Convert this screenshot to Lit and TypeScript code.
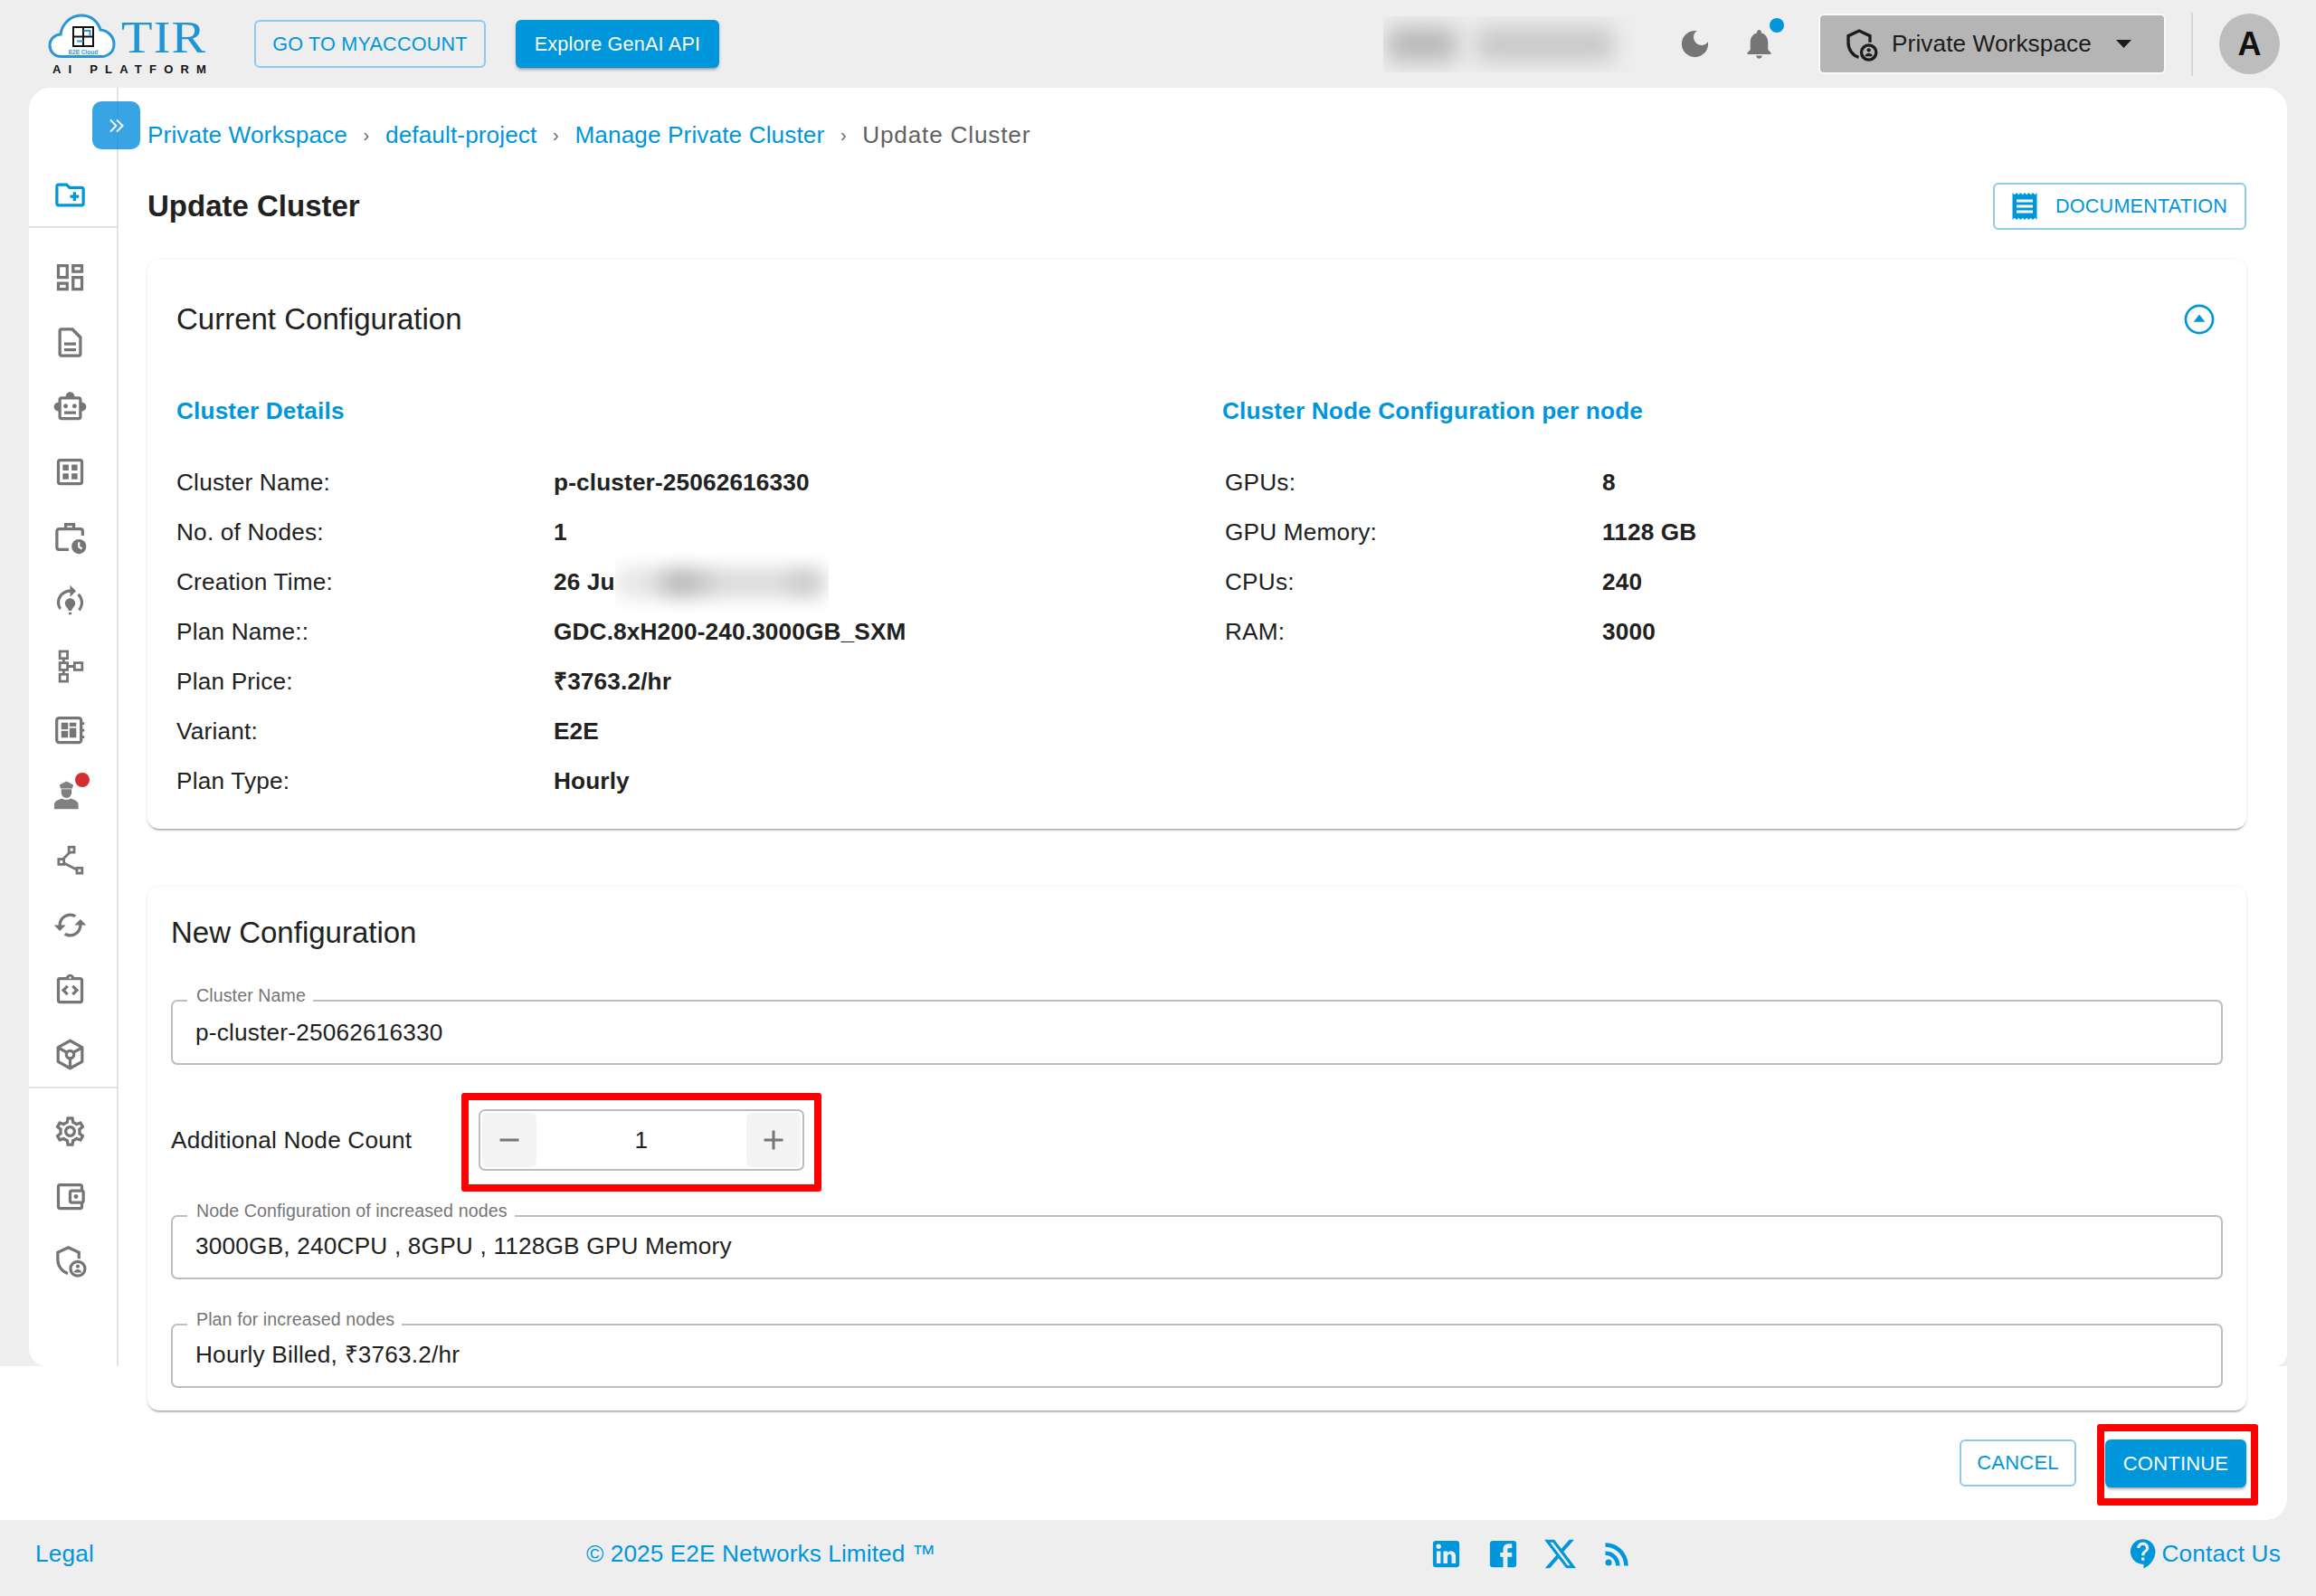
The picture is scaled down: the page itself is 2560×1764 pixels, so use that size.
import { LitElement, html, svg, css } from "lit";
import { customElement } from "lit/decorators.js";

const ic = (body: unknown, cls = "") => html`<svg class="ic ${cls}" viewBox="0 0 24 24">${body}</svg>`;
const P = (d: string) => svg`<path d=${d}></path>`;

function shieldIcon(cls = "") {
  return ic(svg`<path class="st" d="M10.5 20.6C6.4 19.4 3.6 15.4 3.6 11V6.4L10.8 3 18 6.4v4.2"></path><circle class="st wfill" cx="17.2" cy="17.4" r="4.9"></circle><circle class="pf" cx="17.2" cy="15.8" r="1.3"></circle><path class="pf" d="M14.6 20c.4-1.5 1.5-2.1 2.6-2.1s2.2.6 2.6 2.1z"></path>`, cls);
}

const sideTop = ic(P("M20 6h-8l-2-2H4c-1.11 0-1.99.89-1.99 2L2 18c0 1.11.89 2 2 2h16c1.11 0 2-.89 2-2V8c0-1.11-.89-2-2-2zm0 12H4V6h5.17l2 2H20v10zm-8-4h2v2h2v-2h2v-2h-2v-2h-2v2h-2z"), "blue");

const sideMain = [
  ic(P("M19 5v2h-4V5h4M9 5v6H5V5h4m10 8v6h-4v-6h4M9 17v2H5v-2h4M21 3h-8v6h8V3zM11 3H3v10h8V3zm10 8h-8v10h8V11zm-10 4H3v6h8v-6z")),
  ic(P("M8 16h8v2H8zm0-4h8v2H8zm6-10H6c-1.1 0-2 .9-2 2v16c0 1.1.89 2 1.99 2H18c1.1 0 2-.9 2-2V8l-6-6zm4 18H6V4h7l5 5v11z")),
  ic(P("M20 9V7c0-1.1-.9-2-2-2h-3c0-1.66-1.34-3-3-3S9 3.34 9 5H6c-1.1 0-2 .9-2 2v2c-1.66 0-3 1.34-3 3s1.34 3 3 3v4c0 1.1.9 2 2 2h12c1.1 0 2-.9 2-2v-4c1.66 0 3-1.34 3-3s-1.34-3-3-3zm-2 10H6V7h12v12zm-9-6c-.83 0-1.5-.67-1.5-1.5S8.17 10 9 10s1.5.67 1.5 1.5S9.83 13 9 13zm7.5-1.5c0 .83-.67 1.5-1.5 1.5s-1.5-.67-1.5-1.5.67-1.5 1.5-1.5 1.5.67 1.5 1.5zM8 15h8v2H8v-2z")),
  ic(P("M19 5v14H5V5h14m0-2H5c-1.1 0-2 .9-2 2v14c0 1.1.9 2 2 2h14c1.1 0 2-.9 2-2V5c0-1.1-.9-2-2-2zM7 7h4v4H7zm6 0h4v4h-4zm-6 6h4v4H7zm6 0h4v4h-4z")),
  ic(svg`<path class="st" d="M11 20.5H4.5a1.5 1.5 0 0 1-1.5-1.5V8a1.5 1.5 0 0 1 1.5-1.5h14.5a1.5 1.5 0 0 1 1.5 1.5v3M9 6.5V3.500h5.500v3"></path><circle cx="18" cy="18.500" r="5"></circle><path class="wst" d="M18 15.500v3.200l2 1.300"></path>`),
  ic(P("M15.5 13.5c0 2-2.5 3.5-2.5 5h-2c0-1.5-2.5-3-2.5-5 0-1.93 1.57-3.5 3.5-3.5s3.5 1.57 3.5 3.5zm-2.5 6h-2V21h2v-1.5zm6-6.5c0 1.68-.59 3.21-1.58 4.42l1.42 1.42C20.18 16.27 21 14.71 21 13c0-2.54-1.06-4.83-2.76-6.46L16.83 7.95C18.16 9.22 19 11.01 19 13zM16 5l-4-4v3c-4.97 0-9 4.03-9 9 0 1.71.82 3.27 1.84 4.84l1.42-1.42C5.59 16.21 5 14.68 5 13c0-3.87 3.13-7 7-7v3l4-4z")),
  ic(svg`<g class="st thin"><rect x="5" y="1.800" width="5.200" height="4.800"></rect><rect x="5" y="9.600" width="5.200" height="4.800"></rect><rect x="5" y="17.400" width="5.200" height="4.800"></rect><rect x="15" y="9.600" width="5.200" height="4.800"></rect><path d="M7.600 6.600v3M7.600 14.400v3M10.200 12H15"></path></g>`),
  ic(svg`<rect class="st" x="2.900" y="3.500" width="16.600" height="16.600" rx="1.600"></rect><rect x="6" y="6.600" width="4.600" height="4.600"></rect><rect x="11.600" y="6.600" width="4.600" height="2.600"></rect><rect x="6" y="12.200" width="4.600" height="4.600"></rect><rect x="11.600" y="10.200" width="4.600" height="6.600"></rect><path class="st thin" d="M19.500 7.200h2.200M19.500 11.800h2.200M19.500 16.400h2.200"></path>`),
  html`<span class="badged">${ic(svg`<path d="M4.800 4.600 9.500 2.200l4.700 2.400-.7 2.400H5.500z"></path><path d="M6 7.600h7v2.400a3.500 3.500 0 0 1-7 0z"></path><path d="M1.200 21v-3c0-2.600 3.600-3.600 5.100-4.200 1.400 1 4.900 1 6.300 0 1.500.6 5 1.600 5 4.200v3z"></path>`, "ltgrey")}<i class="dot"></i></span>`,
  ic(svg`<g class="st thin"><rect x="11.200" y="2.600" width="3.600" height="3.600"></rect><rect x="4.200" y="10.800" width="3.600" height="3.600"></rect><rect x="16.600" y="16.800" width="3.600" height="3.600"></rect><path d="M11.800 6.200 7.200 10.800M7.800 13.600l8.800 4.400"></path></g>`),
  ic(P("M19 8l-4 4h3c0 3.31-2.69 6-6 6-1.01 0-1.97-.25-2.8-.7l-1.46 1.46C8.97 19.54 10.43 20 12 20c4.42 0 8-3.58 8-8h3l-4-4zM6 12c0-3.31 2.69-6 6-6 1.01 0 1.97.25 2.8.7l1.46-1.46C15.03 4.46 13.57 4 12 4c-4.42 0-8 3.58-8 8H1l4 4 4-4H6z")),
  ic(P("M11 14.17 8.83 12 11 9.83 9.59 8.41 6 12l3.59 3.59zM14.41 15.59 18 12l-3.59-3.59L13 9.83 15.17 12 13 14.17zM19 3h-4.18C14.4 1.84 13.3 1 12 1s-2.4.84-2.82 2H5c-.14 0-.27.01-.4.04-.39.08-.74.28-1.01.55-.18.18-.33.4-.43.64-.1.23-.16.49-.16.77v14c0 .27.06.54.16.78s.25.45.43.64c.27.27.62.47 1.01.55.13.02.26.03.4.03h14c1.1 0 2-.9 2-2V5c0-1.1-.9-2-2-2zm-7-.25c.41 0 .75.34.75.75s-.34.75-.75.75-.75-.34-.75-.75.34-.75.75-.75zM19 19H5V5h14v14z")),
  ic(svg`<g class="st"><path stroke-linejoin="round" d="M12 2.600 20.200 7.200v9.600L12 21.400l-8.200-4.600V7.200z"></path><circle cx="12" cy="12" r="2.600"></circle><path d="M4 7.400l6 3.300M20 7.400l-6 3.300M12 14.600v6.600"></path></g>`),
];

const sideBottom = [
  ic(P("M19.43 12.98c.04-.32.07-.64.07-.98 0-.34-.03-.66-.07-.98l2.11-1.65c.19-.15.24-.42.12-.64l-2-3.46c-.09-.16-.26-.25-.44-.25-.06 0-.12.01-.17.03l-2.49 1c-.52-.4-1.08-.73-1.69-.98l-.38-2.65C14.46 2.18 14.25 2 14 2h-4c-.25 0-.46.18-.49.42l-.38 2.65c-.61.25-1.17.59-1.69.98l-2.49-1c-.06-.02-.12-.03-.18-.03-.17 0-.34.09-.43.25l-2 3.46c-.13.22-.07.49.12.64l2.11 1.65c-.04.32-.07.65-.07.98 0 .33.03.66.07.98l-2.11 1.65c-.19.15-.24.42-.12.64l2 3.46c.09.16.26.25.44.25.06 0 .12-.01.17-.03l2.49-1c.52.4 1.08.73 1.69.98l.38 2.65c.03.24.24.42.49.42h4c.25 0 .46-.18.49-.42l.38-2.65c.61-.25 1.17-.59 1.69-.98l2.49 1c.06.02.12.03.18.03.17 0 .34-.09.43-.25l2-3.46c.12-.22.07-.49-.12-.64l-2.11-1.65zm-1.98-1.71c.04.31.05.52.05.73 0 .21-.02.43-.05.73l-.14 1.13.89.7 1.08.84-.7 1.21-1.27-.51-1.04-.42-.9.68c-.43.32-.84.56-1.25.73l-1.06.43-.16 1.13-.2 1.35h-1.4l-.19-1.35-.16-1.13-1.06-.43c-.43-.18-.83-.41-1.23-.71l-.91-.7-1.06.43-1.27.51-.7-1.21 1.08-.84.89-.7-.14-1.13c-.03-.31-.05-.54-.05-.74s.02-.43.05-.73l.14-1.13-.89-.7-1.08-.84.7-1.21 1.27.51 1.04.42.9-.68c.43-.32.84-.56 1.25-.73l1.06-.43.16-1.13.2-1.35h1.39l.19 1.35.16 1.13 1.06.43c.43.18.83.41 1.23.71l.91.7 1.06-.43 1.27-.51.7 1.21-1.07.85-.89.7.14 1.13zM12 8c-2.21 0-4 1.79-4 4s1.79 4 4 4 4-1.79 4-4-1.79-4-4-4zm0 6c-1.1 0-2-.9-2-2s.9-2 2-2 2 .9 2 2-.9 2-2 2z")),
  ic(svg`<path d="M21 7.28V5c0-1.1-.9-2-2-2H5c-1.11 0-2 .9-2 2v14c0 1.1.89 2 2 2h14c1.1 0 2-.9 2-2v-2.28c.59-.35 1-.98 1-1.72V9c0-.74-.41-1.38-1-1.72zM20 9v6h-7V9h7zM5 19V5h14v2h-6c-1.1 0-2 .9-2 2v6c0 1.1.9 2 2 2h6v2H5z"></path><circle cx="16" cy="12" r="1.5"></circle>`),
  shieldIcon(),
];

const leftRows = [
  ["Cluster Name:", "p-cluster-25062616330"],
  ["No. of Nodes:", "1"],
  ["Creation Time:", "26 Ju"],
  ["Plan Name::", "GDC.8xH200-240.3000GB_SXM"],
  ["Plan Price:", "₹3763.2/hr"],
  ["Variant:", "E2E"],
  ["Plan Type:", "Hourly"],
];
const rightRows = [
  ["GPUs:", "8"],
  ["GPU Memory:", "1128 GB"],
  ["CPUs:", "240"],
  ["RAM:", "3000"],
];

@customElement("app-root")
export class AppRoot extends LitElement {
  static styles = css`
    :host { display: block; width: 2560px; height: 1764px; background: #eeeeee; font-family: "Liberation Sans", Arial, sans-serif; font-size: 26.2px; letter-spacing: .2px; color: #212121; overflow: hidden; }
    * { box-sizing: border-box; }
    .ic { width: 39px; height: 39px; fill: #757575; display: block; flex: none; }
    .ic.blue { fill: #0096db; }
    .ic.ltgrey { fill: #808080; }
    .st { fill: none; stroke: #757575; stroke-width: 2; }
    .st.thin, .thin { stroke-width: 1.7; }
    .wst { fill: none; stroke: #fff; stroke-width: 1.3; }
    .st.wfill { fill: #fff; }
    .pf { fill: #757575; }

    header { height: 97px; display: flex; align-items: center; padding: 0 40px 0 53px; }
    .logo { width: 228px; height: 67px; flex: none; display: flex; flex-direction: column; letter-spacing: 0; }
    .logotop { display: flex; height: 49px; flex: none; }
    .logotop svg { width: 75px; height: 49px; flex: none; display: block; }
    .tir { font-family: "Liberation Serif", serif; font-size: 50px; line-height: 49px; color: #2293d6; margin-left: 6px; letter-spacing: 1px; transform: scaleX(1.13); transform-origin: left center; margin-top: 2px; }
    .aip { font-size: 13px; font-weight: 700; line-height: 18px; letter-spacing: 8.2px; color: #111; margin: 4px 0 0 5px; white-space: nowrap; }
    .btn { display: inline-flex; align-items: center; justify-content: center; border-radius: 6px; font-size: 21.6px; flex: none; }
    .btn.out { border: 2px solid #90c9ec; color: #0096db; background: transparent; }
    .btn.fill { background: #0096db; color: #fff; box-shadow: 0 3px 3px -2px rgba(0,0,0,.3), 0 2px 4px rgba(0,0,0,.18); }
    .myacc { width: 256px; height: 53px; }
    .genai { width: 225px; height: 53px; margin-left: 33px; }
    .right { margin-left: auto; display: flex; align-items: center; }
    .blur { width: 282px; height: 62px; overflow: hidden; position: relative; display: flex; gap: 20px; padding: 12px 0 0 4px; }
    .blur i { display: block; height: 38px; filter: blur(12px); border-radius: 10px; flex: none; }
    .blur i:first-child { width: 78px; background: #b8b8b8; }
    .blur i:last-child { width: 154px; background: #c8c8c8; }
    .moon { margin-left: 43px; }
    .bellw { position: relative; margin-left: 32px; }
    .bdot { position: absolute; width: 16px; height: 16px; border-radius: 50%; background: #0096db; top: -9px; right: -8px; }
    .ws { width: 384px; height: 67px; margin-left: 46px; background: #b5b5b5; border: 2px solid #fafafa; border-radius: 6px; display: flex; align-items: center; padding-left: 25px; color: #1c1c1c; }
    .ws .ic { fill: #1c1c1c; width: 40px; height: 40px; }
    .ws .st { stroke: #1c1c1c; }
    .ws .st.wfill { fill: #b5b5b5; }
    .ws .pf { fill: #1c1c1c; }
    .ws span { margin-left: 14px; letter-spacing: .1px; }
    .ws svg.car { margin-left: 27px; width: 17px; height: 9px; fill: #1c1c1c; }
    .vr { width: 2px; height: 70px; background: #d6d6d6; margin-left: 28px; }
    .av { width: 67px; height: 67px; border-radius: 50%; background: #bdbdbd; margin-left: 29px; display: flex; align-items: center; justify-content: center; font-weight: 700; font-size: 36px; color: #111; }

    .main { width: 2528px; display: grid; grid-template-columns: 32px 99px 1fr; grid-template-rows: 1413px 170px; position: relative; }
    .panel { grid-column: 2 / 4; grid-row: 1; background: #fff; border-radius: 24px 24px 14px 20px; }
    .strip { grid-column: 1 / 4; grid-row: 2; background: #fff; border-bottom-right-radius: 24px; }
    .side { grid-column: 2; grid-row: 1; border-right: 2px solid #e2e2e2; padding-top: 83px; display: flex; flex-direction: column; align-items: center; }
    .sitem { height: 71.6px; width: 100%; display: flex; align-items: center; justify-content: center; flex: none; padding-right: 7px; }
    .sgroup { width: 100%; display: flex; flex-direction: column; }
    .g1 { border-bottom: 2px solid #e2e2e2; height: 72px; }
    .g2 { padding-top: 19px; border-bottom: 2px solid #e2e2e2; height: 951px; }
    .g3 { padding-top: 12px; }
    .badged { position: relative; display: block; }
    .dot { position: absolute; width: 16px; height: 16px; border-radius: 50%; background: #d32f2f; left: 25px; top: -6px; }
    .toggle { position: absolute; left: 102px; top: 15px; width: 53px; height: 53px; border-radius: 10px; background: rgba(0,138,220,.78); display: flex; align-items: center; justify-content: center; }
    .toggle svg { width: 24px; height: 24px; fill: none; stroke: #fff; stroke-width: 1.9; }

    .content { grid-column: 3; grid-row: 1 / 3; padding: 36px 45px 0 32px; min-width: 0; }
    .crumbs { display: flex; align-items: center; height: 32px; line-height: 32px; color: #0096db; white-space: nowrap; letter-spacing: .1px; }
    .crumbs .sep { color: #666; font-size: 20px; width: 42px; text-align: center; }
    .crumbs .cur { color: #616161; letter-spacing: .8px; }
    .titlebar { display: flex; align-items: center; justify-content: space-between; margin-top: 37px; height: 52px; }
    h1 { margin: 0; font-size: 33px; font-weight: 700; color: #212121; letter-spacing: 0; }
    .doc { width: 280px; height: 52px; background: #fff; justify-content: flex-start; padding-left: 15px; gap: 16px; }
    .doc .ic { width: 36px; height: 36px; fill: #0096db; }

    .card { background: #fff; border-radius: 13px; box-shadow: 0 3px 2px -2px rgba(0,0,0,.3), 0 2px 2px rgba(0,0,0,.1), 0 1px 5px rgba(0,0,0,.08); }
    .c1 { margin-top: 33px; height: 629px; padding: 46px 32px 0; }
    .chead { display: flex; align-items: center; justify-content: space-between; height: 40px; }
    h2 { margin: 0; font-size: 33px; font-weight: 400; line-height: 40px; color: #212121; letter-spacing: 0; }
    .chead svg { width: 38px; height: 38px; fill: none; stroke: #0096db; stroke-width: 1.7; flex: none; margin-right: 1px; }
    .chead svg path { fill: #0096db; stroke: none; }
    .cols { display: grid; grid-template-columns: 1156px 1fr; margin-top: 65px; }
    h3 { margin: 0 0 36px; font-size: 26.2px; font-weight: 700; color: #0096db; line-height: 32px; letter-spacing: .15px; }
    .rows { display: flex; flex-direction: column; }
    .row { display: flex; height: 55px; line-height: 55px; }
    .row .l { width: 417px; flex: none; }
    .row .v { font-weight: 700; position: relative; letter-spacing: .15px; }
    .rows.r { padding-left: 3px; }
    .mask { position: absolute; left: 68px; top: -4px; width: 236px; height: 64px; overflow: hidden; background: #fff; display: flex; align-items: center; }
    .mask i { display: block; height: 34px; width: 236px; flex: none; border-radius: 12px; filter: blur(10px); background: linear-gradient(90deg, #e8e8e8 0%, #e6e6e6 15%, #b6b6b6 30%, #dcdcdc 50%, #dedede 75%, #c6c6c6 90%, #e8e8e8 100%); }

    .c2 { margin-top: 64px; height: 579px; padding: 31px 26px 0 26px; }
    fieldset { margin: 39px 0 0; padding: 0 0 0 25px; border: 2px solid #bdbdbd; border-radius: 7px; min-width: 0; height: 87px; }
    legend { margin-left: -9px; padding: 0 8px 12px 10px; font-size: 19.6px; line-height: 20px; color: #757575; letter-spacing: .1px; }
    fieldset .val { line-height: 40px; color: #212121; margin-top: -1px; }
    .f2, .f3 { margin-top: 34px; height: 86px; }
    .f2 .val, .f3 .val { margin-top: -3px; }
    .nodes { display: flex; align-items: center; margin-top: 49px; height: 68px; }
    .nodes .lab { width: 340px; flex: none; }
    .stepw { position: relative; width: 360px; height: 68px; }
    .stepw::after, .contw::after { content: ""; position: absolute; border: 8px solid #ff0000; border-radius: 3px; pointer-events: none; }
    .stepw::after { left: -19px; right: -19px; top: -18px; bottom: -23px; }
    .step { width: 100%; height: 100%; border: 2px solid #bdbdbd; border-radius: 7px; display: flex; align-items: center; padding: 2px; }
    .step b { width: 60px; height: 100%; background: #f4f4f4; border-radius: 6px; display: flex; align-items: center; justify-content: center; flex: none; }
    .step b svg { width: 36px; height: 36px; fill: #757575; }
    .step span { flex: 1; text-align: center; }

    .actions { display: flex; justify-content: flex-end; align-items: flex-start; gap: 32px; margin-top: 32px; }
    .cancel { width: 129px; height: 52px; background: #fff; font-size: 22px; }
    .contw { position: relative; display: block; width: 156px; height: 53px; }
    .contw .btn { width: 100%; height: 100%; font-size: 22px; }
    .contw::after { left: -9px; right: -13px; top: -17px; bottom: -20px; }

    footer { height: 84px; display: grid; grid-template-columns: 609px 936px 1fr auto; align-items: center; padding: 0 39px 10px 39px; color: #0096db; }
    footer > span:nth-child(2) { letter-spacing: .1px; }
    .soc { display: flex; align-items: center; }
    .soc svg { display: block; fill: #0096db; width: 39px; height: 39px; flex: none; }
    .soc svg + svg { margin-left: 24px; }
    .li { margin-left: -5px; }
    .soc .x { margin-left: 24px; }
    .soc .rss { margin-left: 24px; }
    .contact { display: flex; align-items: center; }
    .contact svg { width: 39px; height: 39px; fill: #0096db; display: block; }
  `;

  render() {
    return html`
      <header>
        <div class="logo">
          <div class="logotop">
            <svg viewBox="0 0 75 49">
              <path d="M15 47.500C6 47.500 2 41 2 35c0-7 6-12 12-12C15 13 24 2 37 2c10 0 18 6 21 16 9 1 15 8 15 16 0 8-6 13.500-14 13.500z" fill="#fff" stroke="#2a96d8" stroke-width="3"></path>
              <g fill="none" stroke-width="2"><rect x="28" y="15" width="22" height="21" stroke="#111"></rect><path d="M39 15v21M28 25.500h22" stroke="#111"></path><path d="M39.500 19h7v6M39 30.500h-7" stroke="#2a96d8"></path></g>
              <text x="39" y="45" font-size="6.500" font-weight="700" fill="#2a96d8" text-anchor="middle" font-family="Liberation Sans">E2E Cloud</text>
            </svg>
            <span class="tir">TIR</span>
          </div>
          <span class="aip">AI PLATFORM</span>
        </div>
        <span class="btn out myacc">GO TO MYACCOUNT</span>
        <span class="btn fill genai">Explore GenAI API</span>
        <div class="right">
          <div class="blur"><i></i><i></i></div>
          <svg class="ic moon" viewBox="0 0 24 24"><path d="M12 3a9 9 0 1 0 9 9c0-.46-.04-.92-.1-1.36a5.39 5.39 0 0 1-4.4 2.26 5.4 5.4 0 0 1-3.14-9.8c-.44-.06-.9-.1-1.36-.1z"></path></svg>
          <span class="bellw">
            <svg class="ic" viewBox="0 0 24 24"><path d="M12 22c1.1 0 2-.9 2-2h-4c0 1.1.89 2 2 2zm6-6v-5c0-3.07-1.64-5.64-4.5-6.32V4c0-.83-.67-1.5-1.5-1.5s-1.5.67-1.5 1.5v.68C7.63 5.36 6 7.92 6 11v5l-2 2v1h16v-1l-2-2z"></path></svg>
            <i class="bdot"></i>
          </span>
          <div class="ws">
            ${shieldIcon()}
            <span>Private Workspace</span>
            <svg class="car" viewBox="0 0 17 9"><path d="M0 0h17L8.500 9z"></path></svg>
          </div>
          <div class="vr"></div>
          <div class="av">A</div>
        </div>
      </header>

      <div class="main">
        <div class="panel"></div>
        <div class="strip"></div>
        <nav class="side">
          <div class="sgroup g1"><div class="sitem">${sideTop}</div></div>
          <div class="sgroup g2">${sideMain.map((i) => html`<div class="sitem">${i}</div>`)}</div>
          <div class="sgroup g3">${sideBottom.map((i) => html`<div class="sitem">${i}</div>`)}</div>
        </nav>

        <section class="content">
          <div class="crumbs">
            <span>Private Workspace</span><span class="sep">›</span>
            <span>default-project</span><span class="sep">›</span>
            <span>Manage Private Cluster</span><span class="sep">›</span>
            <span class="cur">Update Cluster</span>
          </div>
          <div class="titlebar">
            <h1>Update Cluster</h1>
            <span class="btn out doc">
              <svg class="ic" viewBox="0 0 24 24"><path d="M18 17H6v-2h12v2zm0-4H6v-2h12v2zm0-4H6V7h12v2zM3 22l1.5-1.5L6 22l1.5-1.5L9 22l1.5-1.5L12 22l1.5-1.5L15 22l1.5-1.5L18 22l1.5-1.5L21 22V2l-1.5 1.5L18 2l-1.5 1.5L15 2l-1.5 1.5L12 2l-1.5 1.5L9 2 7.5 3.5 6 2 4.5 3.5 3 2v20z"></path></svg>
              DOCUMENTATION
            </span>
          </div>

          <div class="card c1">
            <div class="chead">
              <h2>Current Configuration</h2>
              <svg viewBox="0 0 24 24"><circle cx="12" cy="12" r="9.500"></circle><path d="M12 8.600l4 5.200H8z"></path></svg>
            </div>
            <div class="cols">
              <div>
                <h3>Cluster Details</h3>
                <div class="rows">
                  ${leftRows.map(([l, v], i) => html`<div class="row"><span class="l">${l}</span><span class="v">${v}${i === 2 ? html`<span class="mask"><i></i></span>` : ""}</span></div>`)}
                </div>
              </div>
              <div>
                <h3>Cluster Node Configuration per node</h3>
                <div class="rows r">
                  ${rightRows.map(([l, v]) => html`<div class="row"><span class="l">${l}</span><span class="v">${v}</span></div>`)}
                </div>
              </div>
            </div>
          </div>

          <div class="card c2">
            <h2>New Configuration</h2>
            <fieldset><legend>Cluster Name</legend><div class="val">p-cluster-25062616330</div></fieldset>
            <div class="nodes">
              <span class="lab">Additional Node Count</span>
              <div class="stepw">
                <div class="step">
                  <b><svg viewBox="0 0 24 24"><path d="M5 11h14v2H5z"></path></svg></b>
                  <span>1</span>
                  <b><svg viewBox="0 0 24 24"><path d="M19 13h-6v6h-2v-6H5v-2h6V5h2v6h6v2z"></path></svg></b>
                </div>
              </div>
            </div>
            <fieldset class="f2"><legend>Node Configuration of increased nodes</legend><div class="val">3000GB, 240CPU , 8GPU , 1128GB GPU Memory</div></fieldset>
            <fieldset class="f3"><legend>Plan for increased nodes</legend><div class="val">Hourly Billed, ₹3763.2/hr</div></fieldset>
          </div>

          <div class="actions">
            <span class="btn out cancel">CANCEL</span>
            <span class="contw"><span class="btn fill">CONTINUE</span></span>
          </div>
        </section>
        <div class="toggle"><svg viewBox="0 0 24 24"><path d="M5 5.500l6.500 6.500L5 18.500M12 5.500l6.500 6.500-6.500 6.500"></path></svg></div>
      </div>

      <footer>
        <span>Legal</span>
        <span>© 2025 E2E Networks Limited ™</span>
        <div class="soc">
          <svg class="li" viewBox="0 0 24 24"><path d="M19 3a2 2 0 0 1 2 2v14a2 2 0 0 1-2 2H5a2 2 0 0 1-2-2V5a2 2 0 0 1 2-2h14m-.5 15.500v-5.300a3.260 3.260 0 0 0-3.260-3.260c-.85 0-1.840.52-2.320 1.300v-1.110h-2.790v8.370h2.790v-4.930c0-.77.62-1.400 1.390-1.400a1.400 1.400 0 0 1 1.400 1.400v4.930h2.790M6.880 8.560a1.680 1.680 0 0 0 1.680-1.680c0-.93-.75-1.690-1.680-1.690a1.690 1.690 0 0 0-1.690 1.690c0 .93.76 1.680 1.690 1.680m1.390 9.940v-8.370H5.500v8.370h2.770z"></path></svg>
          <svg viewBox="0 0 24 24"><path d="M5 3h14a2 2 0 0 1 2 2v14a2 2 0 0 1-2 2H5a2 2 0 0 1-2-2V5a2 2 0 0 1 2-2m13 2h-2.500A3.500 3.500 0 0 0 12 8.500V11h-2v3h2v7h3v-7h3v-3h-3V9a1 1 0 0 1 1-1h2V5z"></path></svg>
          <svg class="x" viewBox="0 0 24 24"><path d="M18.244 2.250h3.308l-7.227 8.260 8.502 11.240H16.170l-5.214-6.817L4.990 21.750H1.680l7.730-8.835L1.254 2.250H8.080l4.713 6.231zm-1.161 17.520h1.833L7.084 4.126H5.117z"></path></svg>
          <svg class="rss" viewBox="0 0 24 24"><circle cx="6.180" cy="17.820" r="2.180"></circle><path d="M4 4.440v2.830c7.030 0 12.730 5.700 12.730 12.730h2.830c0-8.590-6.970-15.560-15.560-15.560zm0 5.660v2.830c3.900 0 7.070 3.170 7.070 7.070h2.830c0-5.470-4.430-9.900-9.900-9.900z"></path></svg>
        </div>
        <div class="contact">
          <svg viewBox="0 0 24 24"><path d="M11.500 2C6.810 2 3 5.810 3 10.500S6.810 19 11.500 19h.5v3c4.860-2.340 8-7 8-11.500C20 5.810 16.190 2 11.500 2zm1 14.500h-2v-2h2v2zm0-3.500h-2c0-3.250 3-3 3-5 0-1.100-.9-2-2-2s-2 .9-2 2h-2c0-2.210 1.790-4 4-4s4 1.790 4 4c0 2.500-3 2.750-3 5z"></path></svg>
          <span>Contact Us</span>
        </div>
      </footer>
    `;
  }
}
